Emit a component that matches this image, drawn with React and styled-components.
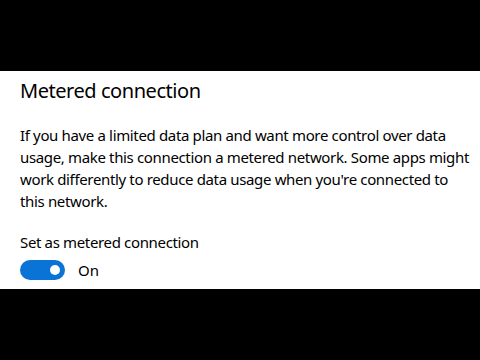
import React, { useState } from 'react';
import styled, { createGlobalStyle } from 'styled-components';

const GlobalStyle = createGlobalStyle`
  html, body {
    margin: 0;
    padding: 0;
    background: #000;
  }
  body {
    width: 480px;
    height: 360px;
    overflow: hidden;
  }
`;

const Screen = styled.div`
  width: 480px;
  height: 360px;
  background: #000;
  padding-top: 71px;
  box-sizing: border-box;
`;

const Panel = styled.div`
  height: 218px;
  background: #fff;
  padding: 7px 0 0 20px;
  box-sizing: border-box;
  font-family: "Noto Sans", "Open Sans", sans-serif;
  color: #000;
`;

const Title = styled.h2`
  margin: 0;
  font-size: 20px;
  font-weight: 400;
  line-height: 26px;
  letter-spacing: -0.45px;
`;

const Description = styled.p`
  margin: 20px 0 0;
  width: 453px;
  font-size: 15px;
  line-height: 22px;
  letter-spacing: -0.35px;
`;

const Label = styled.div`
  margin-top: 19px;
  font-size: 15px;
  line-height: 22px;
  letter-spacing: -0.35px;
`;

const ToggleRow = styled.div`
  display: flex;
  align-items: center;
  gap: 13px;
  margin-top: 7px;
`;

const Track = styled.button`
  position: relative;
  width: 45px;
  height: 20px;
  padding: 0;
  border: none;
  border-radius: 10px;
  background: ${(p) => (p.$on ? '#0a74d6' : '#ccc')};
  cursor: pointer;
`;

const Knob = styled.span`
  position: absolute;
  top: 5px;
  left: ${(p) => (p.$on ? '30px' : '5px')};
  width: 10px;
  height: 10px;
  border-radius: 50%;
  background: #fff;
`;

const State = styled.span`
  font-size: 15px;
  line-height: 20px;
`;

export default function App() {
  const [on, setOn] = useState(true);
  return (
    <Screen>
      <GlobalStyle />
      <Panel>
        <Title>Metered connection</Title>
        <Description>
          If you have a limited data plan and want more control over data usage, make this
          connection a metered network. Some apps might work differently to reduce data usage
          when you're connected to this network.
        </Description>
        <Label>Set as metered connection</Label>
        <ToggleRow>
          <Track $on={on} onClick={() => setOn(!on)}>
            <Knob $on={on} />
          </Track>
          <State>{on ? 'On' : 'Off'}</State>
        </ToggleRow>
      </Panel>
    </Screen>
  );
}
